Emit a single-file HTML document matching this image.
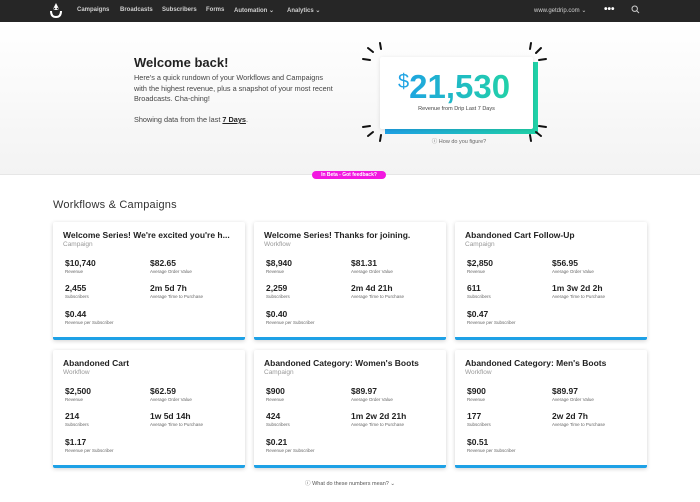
<!DOCTYPE html>
<html><head><meta charset="utf-8">
<style>
*{margin:0;padding:0;box-sizing:border-box}
body{width:700px;height:502px;overflow:hidden;background:#fff;font-family:"Liberation Sans",sans-serif;color:#222;position:relative}
.nav{position:absolute;left:0;top:0;width:700px;height:22px;background:#262626;color:#cfcfcf;font-size:6px;font-weight:bold}
.nav span{position:absolute;top:7px}
.hero{position:absolute;left:0;top:22px;width:700px;height:153px;background:linear-gradient(#fff,#f3f3f3);border-bottom:1px solid #e6e6e6}
.abs{position:absolute}
.card{position:absolute;width:192px;height:118px;background:#fff;box-shadow:0 1px 4px rgba(0,0,0,.18);border-bottom:3px solid #1ea1e6;border-radius:2px}
.card .t{position:absolute;left:10px;top:8px;font-size:8.5px;font-weight:bold;white-space:nowrap;color:#222}
.card .s{position:absolute;left:10px;top:19px;font-size:6.5px;color:#999}
.card .v{position:absolute;font-size:8.5px;font-weight:bold;color:#222}
.card .l{position:absolute;font-size:4.5px;color:#666;white-space:nowrap}
.burst line{stroke:#111;stroke-width:2;stroke-linecap:round}
</style></head><body>
<div class="nav">
<svg class="abs" style="left:49px;top:2px" width="14" height="17" viewBox="0 0 14 17"><path d="M7 1 L9 5 Q11 8 7 8 Q3 8 5 5Z" fill="#fff"/><circle cx="5.5" cy="6.5" r="0.8" fill="#262626"/><circle cx="8.5" cy="6.5" r="0.8" fill="#262626"/><path d="M2 9 Q2 15 7 15 Q12 15 12 9" stroke="#fff" stroke-width="2" fill="none"/></svg>
<span style="left:77px">Campaigns</span><span style="left:120px">Broadcasts</span><span style="left:162px">Subscribers</span><span style="left:206px">Forms</span><span style="left:234px">Automation ⌄</span><span style="left:287px">Analytics ⌄</span>
<span style="left:534px;font-weight:normal">www.getdrip.com ⌄</span>
<span style="left:604px;top:4px;font-size:10px;color:#fff">•••</span>
<svg class="abs" style="left:631px;top:5px" width="9" height="9" viewBox="0 0 9 9"><circle cx="3.7" cy="3.7" r="2.7" stroke="#ccc" fill="none"/><line x1="5.8" y1="5.8" x2="8" y2="8" stroke="#ccc"/></svg>
</div>
<div class="hero"></div>
<div class="abs" style="left:134px;top:55px;font-size:13px;font-weight:bold;color:#222">Welcome back!</div>
<div class="abs" style="left:134px;top:73px;font-size:7.3px;line-height:10.5px;color:#444;width:230px">Here's a quick rundown of your Workflows and Campaigns<br>with the highest revenue, plus a snapshot of your most recent<br>Broadcasts. Cha-ching!</div>
<div class="abs" style="left:134px;top:115px;font-size:7.3px;color:#444">Showing data from the last <b style="text-decoration:underline;color:#222">7 Days</b>.</div>
<div class="abs" style="left:385px;top:62px;width:153px;height:72px;background:linear-gradient(90deg,#1ea1e6,#20d3a8)"></div>
<div class="abs" style="left:380px;top:57px;width:153px;height:72px;background:#fff;box-shadow:0 1px 4px rgba(0,0,0,.12);border-radius:2px"></div>
<div class="abs" style="left:398px;top:68px;font-size:33px;font-weight:bold;background:linear-gradient(90deg,#1ea1e6,#22d1a8);-webkit-background-clip:text;color:transparent;white-space:nowrap;letter-spacing:0px"><span style="font-size:20px;font-weight:normal;vertical-align:10px">$</span>21,530</div>
<div class="abs" style="left:380px;top:106px;width:153px;text-align:center;font-size:5.5px;color:#444">Revenue from Drip Last 7 Days</div>
<div class="abs" style="left:380px;top:137px;width:158px;text-align:center;font-size:5.5px;color:#666">ⓘ How do you figure?</div>
<svg class="abs burst" style="left:360px;top:40px" width="200" height="110"><line x1="20" y1="3" x2="21" y2="9"/><line x1="8" y1="8" x2="13" y2="12"/><line x1="3" y1="19" x2="10" y2="20"/><line x1="3" y1="87" x2="10" y2="86"/><line x1="8" y1="96" x2="13" y2="92"/><line x1="20" y1="101" x2="21" y2="95"/><line x1="171" y1="3" x2="170" y2="9"/><line x1="181" y1="8" x2="176" y2="13"/><line x1="186" y1="19" x2="179" y2="20"/><line x1="186" y1="87" x2="179" y2="86"/><line x1="181" y1="96" x2="176" y2="92"/><line x1="171" y1="101" x2="170" y2="95"/></svg>
<div class="abs" style="left:312px;top:171px;width:74px;height:8px;background:#f218e0;border-radius:4px;color:#fff;font-size:5px;font-weight:bold;text-align:center;line-height:8px">In Beta - Got feedback?</div>
<div class="abs" style="left:53px;top:199px;font-size:11px;color:#333;letter-spacing:0.2px">Workflows &amp; Campaigns</div>

<div class="card" style="left:53px;top:222px"><div class="t">Welcome Series! We're excited you're h...</div><div class="s">Campaign</div>
<div class="v" style="left:12px;top:36px">$10,740</div><div class="l" style="left:12px;top:47px">Revenue</div><div class="v" style="left:97px;top:36px">$82.65</div><div class="l" style="left:97px;top:47px">Average Order Value</div>
<div class="v" style="left:12px;top:61px">2,455</div><div class="l" style="left:12px;top:72px">Subscribers</div><div class="v" style="left:97px;top:61px">2m 5d 7h</div><div class="l" style="left:97px;top:72px">Average Time to Purchase</div>
<div class="v" style="left:12px;top:87px">$0.44</div><div class="l" style="left:12px;top:98px">Revenue per Subscriber</div></div>

<div class="card" style="left:254px;top:222px"><div class="t">Welcome Series! Thanks for joining.</div><div class="s">Workflow</div>
<div class="v" style="left:12px;top:36px">$8,940</div><div class="l" style="left:12px;top:47px">Revenue</div><div class="v" style="left:97px;top:36px">$81.31</div><div class="l" style="left:97px;top:47px">Average Order Value</div>
<div class="v" style="left:12px;top:61px">2,259</div><div class="l" style="left:12px;top:72px">Subscribers</div><div class="v" style="left:97px;top:61px">2m 4d 21h</div><div class="l" style="left:97px;top:72px">Average Time to Purchase</div>
<div class="v" style="left:12px;top:87px">$0.40</div><div class="l" style="left:12px;top:98px">Revenue per Subscriber</div></div>

<div class="card" style="left:455px;top:222px"><div class="t">Abandoned Cart Follow-Up</div><div class="s">Campaign</div>
<div class="v" style="left:12px;top:36px">$2,850</div><div class="l" style="left:12px;top:47px">Revenue</div><div class="v" style="left:97px;top:36px">$56.95</div><div class="l" style="left:97px;top:47px">Average Order Value</div>
<div class="v" style="left:12px;top:61px">611</div><div class="l" style="left:12px;top:72px">Subscribers</div><div class="v" style="left:97px;top:61px">1m 3w 2d 2h</div><div class="l" style="left:97px;top:72px">Average Time to Purchase</div>
<div class="v" style="left:12px;top:87px">$0.47</div><div class="l" style="left:12px;top:98px">Revenue per Subscriber</div></div>

<div class="card" style="left:53px;top:350px"><div class="t">Abandoned Cart</div><div class="s">Workflow</div>
<div class="v" style="left:12px;top:36px">$2,500</div><div class="l" style="left:12px;top:47px">Revenue</div><div class="v" style="left:97px;top:36px">$62.59</div><div class="l" style="left:97px;top:47px">Average Order Value</div>
<div class="v" style="left:12px;top:61px">214</div><div class="l" style="left:12px;top:72px">Subscribers</div><div class="v" style="left:97px;top:61px">1w 5d 14h</div><div class="l" style="left:97px;top:72px">Average Time to Purchase</div>
<div class="v" style="left:12px;top:87px">$1.17</div><div class="l" style="left:12px;top:98px">Revenue per Subscriber</div></div>

<div class="card" style="left:254px;top:350px"><div class="t">Abandoned Category: Women's Boots</div><div class="s">Campaign</div>
<div class="v" style="left:12px;top:36px">$900</div><div class="l" style="left:12px;top:47px">Revenue</div><div class="v" style="left:97px;top:36px">$89.97</div><div class="l" style="left:97px;top:47px">Average Order Value</div>
<div class="v" style="left:12px;top:61px">424</div><div class="l" style="left:12px;top:72px">Subscribers</div><div class="v" style="left:97px;top:61px">1m 2w 2d 21h</div><div class="l" style="left:97px;top:72px">Average Time to Purchase</div>
<div class="v" style="left:12px;top:87px">$0.21</div><div class="l" style="left:12px;top:98px">Revenue per Subscriber</div></div>

<div class="card" style="left:455px;top:350px"><div class="t">Abandoned Category: Men's Boots</div><div class="s">Workflow</div>
<div class="v" style="left:12px;top:36px">$900</div><div class="l" style="left:12px;top:47px">Revenue</div><div class="v" style="left:97px;top:36px">$89.97</div><div class="l" style="left:97px;top:47px">Average Order Value</div>
<div class="v" style="left:12px;top:61px">177</div><div class="l" style="left:12px;top:72px">Subscribers</div><div class="v" style="left:97px;top:61px">2w 2d 7h</div><div class="l" style="left:97px;top:72px">Average Time to Purchase</div>
<div class="v" style="left:12px;top:87px">$0.51</div><div class="l" style="left:12px;top:98px">Revenue per Subscriber</div></div>

<div class="abs" style="left:0;top:479px;width:700px;text-align:center;font-size:5.5px;color:#555">ⓘ What do these numbers mean? ⌄</div>
</body></html>
